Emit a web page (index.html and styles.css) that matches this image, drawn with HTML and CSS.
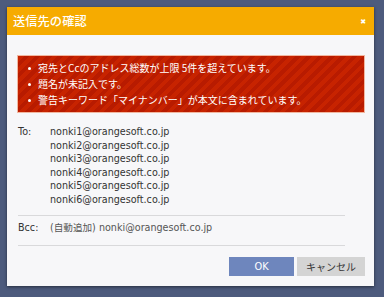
FILE: index.html
```html
<!DOCTYPE html>
<html lang="ja">
<head>
<meta charset="utf-8">
<link rel="stylesheet" href="styles.css">
</head>
<body>
<div class="dialog">
  <div class="header">
    <span class="title">送信先の確認</span>
    <span class="close">&#x2716;</span>
  </div>
  <div class="content">
    <ul class="errors">
      <li>宛先とCcのアドレス総数が上限 5件を超えています。</li>
      <li>題名が未記入です。</li>
      <li>警告キーワード「マイナンバー」が本文に含まれています。</li>
    </ul>
    <div class="row to">
      <div class="label">To:</div>
      <div class="values">
        <div>nonki1@orangesoft.co.jp</div>
        <div>nonki2@orangesoft.co.jp</div>
        <div>nonki3@orangesoft.co.jp</div>
        <div>nonki4@orangesoft.co.jp</div>
        <div>nonki5@orangesoft.co.jp</div>
        <div>nonki6@orangesoft.co.jp</div>
      </div>
    </div>
    <div class="row bcc">
      <div class="label">Bcc:</div>
      <div class="values muted">(自動追加) nonki@orangesoft.co.jp</div>
    </div>
    <div class="buttons">
      <button class="btn ok">OK</button>
      <button class="btn cancel">キャンセル</button>
    </div>
  </div>
</div>
</body>
</html>
```
FILE: styles.css
```css
html, body {
  margin: 0;
  padding: 0;
}
body {
  background: #4d5b7d;
  width: 384px;
  height: 297px;
  overflow: hidden;
  font-family: "DejaVu Sans", "Noto Sans CJK JP", sans-serif;
  font-size: 9.6px;
  color: #333;
}
.dialog {
  margin: 7px 0 0 7px;
  width: 367px;
  height: 279px;
  background: #f7f7f9;
  box-shadow: 0 1px 3px rgba(0, 0, 0, 0.5);
  display: flex;
  flex-direction: column;
}
.header {
  height: 28px;
  background: #f6ab00;
  display: flex;
  align-items: center;
  justify-content: space-between;
  padding: 0 8px 0 6px;
  color: #fff;
}
.title {
  font-family: "Noto Sans CJK JP", sans-serif;
  font-size: 12.2px;
  font-weight: 500;
  letter-spacing: 0.1px;
}
.close {
  font-size: 7px;
  font-weight: bold;
  color: #fff;
  padding-top: 1px;
}
.content {
  padding: 20px 9px 10px 10px;
  display: flex;
  flex-direction: column;
  flex: 1;
}
.errors {
  margin: 0;
  padding: 4px 0 4px 20px;
  list-style: none;
  color: #fff;
  font-family: "Noto Sans CJK JP", sans-serif;
  font-size: 10px;
  line-height: 16px;
  border: 1px solid #f1b7a0;
  background: repeating-linear-gradient(-45deg, #c72300 0, #c72300 4px, #b81b00 4px, #b81b00 8px);
}
.errors li {
  position: relative;
}
.errors li::before {
  content: "";
  position: absolute;
  left: -10px;
  top: 7px;
  width: 3px;
  height: 3px;
  border-radius: 50%;
  background: #fff;
}
.row {
  display: flex;
  margin: 0 20px 0 1px;
  line-height: 13.5px;
}
.label {
  width: 32px;
  flex: none;
}
.to {
  padding: 12px 0 9px;
  border-bottom: 1px solid #d9d9db;
}
.bcc {
  padding: 5px 0 10px;
  border-bottom: 1px solid #d9d9db;
}
.muted {
  color: #555;
}
.buttons {
  display: flex;
  justify-content: flex-end;
  gap: 3px;
  margin-top: auto;
}
.btn {
  border: none;
  height: 19px;
  font-family: "DejaVu Sans", "Noto Sans CJK JP", sans-serif;
  font-size: 9.8px;
  padding: 0;
}
.ok {
  width: 65px;
  background: #6e86bd;
  color: #fff;
}
.cancel {
  width: 68px;
  background: #d4d4d4;
  color: #333;
  font-family: "Noto Sans CJK JP", sans-serif;
  font-size: 10px;
}
```
